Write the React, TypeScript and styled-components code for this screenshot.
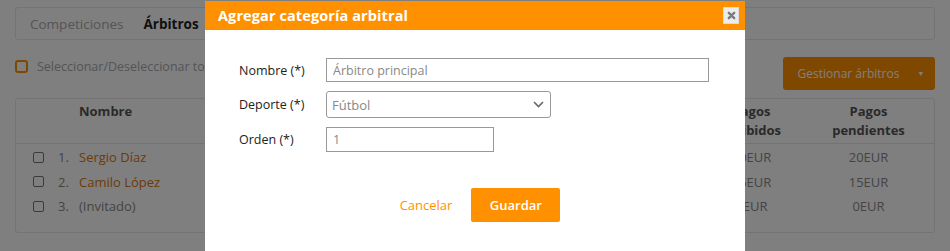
import React from "react";
import styled, { createGlobalStyle } from "styled-components";

const orange = "#ff9100";

const GlobalStyle = createGlobalStyle`
  html, body {
    margin: 0;
    padding: 0;
    background: #fff;
    overflow: hidden;
  }
  body {
    font-family: "Open Sans", "Noto Sans", Arial, sans-serif;
  }
  * {
    box-sizing: border-box;
  }
`;

const Page = styled.div`
  width: 950px;
  height: 251px;
  padding: 7px 15px 0;
  display: flex;
  flex-direction: column;
`;

const TabBar = styled.div`
  height: 33px;
  border: 1px solid #e6e6e6;
  border-radius: 3px;
  display: flex;
  align-items: center;
  gap: 20px;
  padding: 0 14px;
  overflow: hidden;
`;

const Tab = styled.span<{ $active?: boolean }>`
  font-size: 13.5px;
  white-space: nowrap;
  color: ${(p) => (p.$active ? "#222" : "#aaa")};
  font-weight: ${(p) => (p.$active ? 700 : 400)};
`;

const ToolRow = styled.div`
  display: flex;
  justify-content: space-between;
  align-items: flex-start;
  margin-top: 17px;
`;

const SelectAll = styled.label`
  display: flex;
  align-items: center;
  gap: 9px;
  font-size: 12.5px;
  color: #aaa;
  margin-top: 1px;
`;

const OrangeBox = styled.span`
  width: 13px;
  height: 13px;
  border: 2px solid ${orange};
  border-radius: 3px;
`;

const ManageButton = styled.button`
  width: 152px;
  height: 33px;
  border: none;
  border-radius: 3px;
  background: ${orange};
  color: #fff;
  font-family: inherit;
  font-size: 12px;
  display: flex;
  align-items: center;
  justify-content: center;
  gap: 18px;
  padding: 0 0 0 4px;
`;

const Caret = styled.span`
  font-size: 7px;
`;

const Table = styled.div`
  margin-top: 8px;
  border: 1px solid #e6e6e6;
  border-radius: 3px;
  height: 135px;
`;

const HeadRow = styled.div`
  display: grid;
  grid-template-columns: 63px 1fr 117px 117px;
  height: 45px;
  padding: 3px 7px 0 0;
  border-bottom: 1px solid #e6e6e6;
  font-size: 13px;
  font-weight: 700;
  color: #555;
  line-height: 19px;
`;

const HeadCell = styled.div<{ $center?: boolean }>`
  text-align: ${(p) => (p.$center ? "center" : "left")};
`;

const Body = styled.div`
  padding-top: 1px;
`;

const Row = styled.div`
  display: grid;
  grid-template-columns: 25px 21px 1fr 117px 117px;
  align-items: center;
  height: 24.5px;
  padding: 0 7px 0 17px;
  font-size: 13px;
  color: #888;
`;

const SmallBox = styled.span`
  width: 11px;
  height: 11px;
  border: 1px solid #777;
  border-radius: 2px;
`;

const Name = styled.span<{ $guest?: boolean }>`
  color: ${(p) => (p.$guest ? "#888" : "#d9770c")};
`;

const Amount = styled.span`
  text-align: center;
`;

const Overlay = styled.div`
  position: fixed;
  inset: 0;
  background: rgba(0, 0, 0, 0.5);
`;

const Modal = styled.div`
  position: fixed;
  left: 205px;
  top: 1px;
  width: 540px;
  height: 270px;
  background: #fff;
`;

const ModalHeader = styled.div`
  height: 29px;
  background: ${orange};
  display: flex;
  align-items: center;
  justify-content: space-between;
  padding: 0 6px 0 13px;
`;

const ModalTitle = styled.h3`
  margin: 0;
  color: #fff;
  font-size: 14.5px;
  font-weight: 700;
  letter-spacing: 0.1px;
`;

const CloseButton = styled.button`
  width: 16px;
  height: 17px;
  border: 1px solid #dcdcdc;
  background: #ececec;
  padding: 0;
  display: flex;
  align-items: center;
  justify-content: center;
`;

const Form = styled.div`
  padding: 28px 36px 0 34px;
  display: flex;
  flex-direction: column;
  gap: 9px;
`;

const FieldRow = styled.div`
  display: flex;
  align-items: center;
`;

const Label = styled.label`
  width: 87px;
  font-size: 12.5px;
  color: #222;
`;

const Input = styled.input<{ $width: number }>`
  width: ${(p) => p.$width}px;
  height: ${(p) => (p.$width > 300 ? 24 : 25)}px;
  border: 1px solid #999;
  border-radius: 0;
  padding: 0 6px;
  font-family: inherit;
  font-size: 12.5px;
  color: #888;
  outline: none;
  &::placeholder {
    color: #888;
  }
`;

const SelectBox = styled.div`
  width: 225px;
  height: 27px;
  border: 1px solid #999;
  border-radius: 3px;
  display: flex;
  align-items: center;
  justify-content: space-between;
  padding: 0 6px 0 5px;
  font-size: 13px;
  color: #888;
`;

const Footer = styled.div`
  display: flex;
  justify-content: center;
  align-items: center;
  gap: 9px;
  margin-top: 36px;
`;

const LinkButton = styled.button`
  background: none;
  border: none;
  color: ${orange};
  font-family: inherit;
  font-size: 13px;
  padding: 0 10px;
`;

const PrimaryButton = styled.button`
  width: 89px;
  height: 34px;
  border: none;
  border-radius: 2px;
  background: ${orange};
  color: #fff;
  font-family: inherit;
  font-size: 13px;
  font-weight: 600;
`;

const tabs = ["Equipos", "Jugadores", "Calendario", "Clasificaciones", "Sanciones", "Estadísticas"];

const referees = [
  { n: 1, name: "Sergio Díaz", paid: "20EUR", pending: "20EUR" },
  { n: 2, name: "Camilo López", paid: "15EUR", pending: "15EUR" },
  { n: 3, name: "(Invitado)", paid: "0EUR", pending: "0EUR", guest: true },
];

export default function App() {
  return (
    <>
      <GlobalStyle />
      <Page>
        <TabBar>
          <Tab>Competiciones</Tab>
          <Tab $active>Árbitros</Tab>
          {tabs.map((t) => (
            <Tab key={t}>{t}</Tab>
          ))}
        </TabBar>
        <ToolRow>
          <SelectAll>
            <OrangeBox />
            Seleccionar/Deseleccionar todos
          </SelectAll>
          <ManageButton>
            Gestionar árbitros <Caret>▼</Caret>
          </ManageButton>
        </ToolRow>
        <Table>
          <HeadRow>
            <span />
            <HeadCell>Nombre</HeadCell>
            <HeadCell $center>
              Pagos
              <br />
              recibidos
            </HeadCell>
            <HeadCell $center>
              Pagos
              <br />
              pendientes
            </HeadCell>
          </HeadRow>
          <Body>
            {referees.map((r) => (
              <Row key={r.n}>
                <SmallBox />
                <span>{r.n}.</span>
                <Name $guest={r.guest}>{r.name}</Name>
                <Amount>{r.paid}</Amount>
                <Amount>{r.pending}</Amount>
              </Row>
            ))}
          </Body>
        </Table>
      </Page>
      <Overlay />
      <Modal>
        <ModalHeader>
          <ModalTitle>Agregar categoría arbitral</ModalTitle>
          <CloseButton aria-label="Cerrar">
            <svg width="9" height="9" viewBox="0 0 10 10">
              <path d="M2 2 L8 8 M8 2 L2 8" stroke="#7a7a7a" strokeWidth="2.6" strokeLinecap="round" />
            </svg>
          </CloseButton>
        </ModalHeader>
        <Form>
          <FieldRow>
            <Label>Nombre (*)</Label>
            <Input $width={383} placeholder="Árbitro principal" />
          </FieldRow>
          <FieldRow>
            <Label>Deporte (*)</Label>
            <SelectBox>
              <span>Fútbol</span>
              <svg width="11" height="7" viewBox="0 0 11 7">
                <path d="M1 1 L5.5 5.5 L10 1" fill="none" stroke="#666" strokeWidth="1.6" />
              </svg>
            </SelectBox>
          </FieldRow>
          <FieldRow>
            <Label>Orden (*)</Label>
            <Input $width={168} placeholder="1" />
          </FieldRow>
        </Form>
        <Footer>
          <LinkButton>Cancelar</LinkButton>
          <PrimaryButton>Guardar</PrimaryButton>
        </Footer>
      </Modal>
    </>
  );
}
